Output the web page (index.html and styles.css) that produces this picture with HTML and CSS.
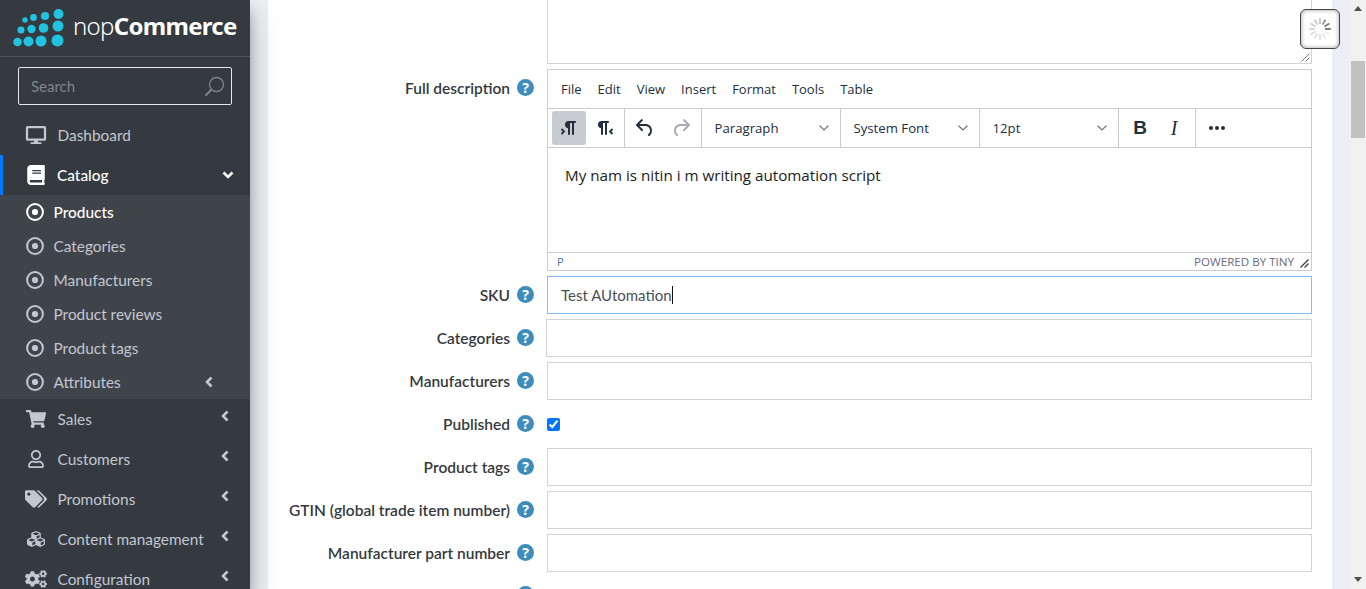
FILE: index.html
```html
<!DOCTYPE html>
<html lang="en">
<head>
<meta charset="utf-8">
<title>Edit product - nopCommerce</title>
<link rel="stylesheet" href="styles.css">
</head>
<body>
<svg class="defs" aria-hidden="true">
  <symbol id="chev-left" viewBox="0 0 10 12"><path d="M7.5 1.5 3 6l4.5 4.5" fill="none" stroke="currentColor" stroke-width="2.6"/></symbol>
  <symbol id="circle-dot" viewBox="0 0 18 18"><circle cx="9" cy="9" r="7.9" fill="none" stroke="currentColor" stroke-width="2"/><circle cx="9" cy="9" r="3.1" fill="currentColor"/></symbol>
  <symbol id="select-chev" viewBox="0 0 10 6"><path d="M.6.8 5 5 9.4.8" fill="none" stroke="currentColor" stroke-width="1.2"/></symbol>
</svg>
<div class="app">
  <aside class="sidebar">
    <div class="brand">
      <svg class="brand-mark" viewBox="0 0 70 50" aria-hidden="true">
        <g fill="#22c3e0">
          <circle cx="25" cy="20" r="2.700"/><circle cx="33.500" cy="17.500" r="3.400"/><circle cx="45" cy="16" r="4.100"/><circle cx="58.500" cy="14" r="5"/>
          <circle cx="21" cy="30" r="3.500"/><circle cx="31.500" cy="29" r="4.200"/><circle cx="43.500" cy="28" r="4.800"/><circle cx="58" cy="26" r="5.500"/>
          <circle cx="17.500" cy="42" r="4.300"/><circle cx="28.500" cy="41.500" r="5"/><circle cx="41" cy="41" r="5.500"/><circle cx="57.500" cy="40.500" r="6"/>
        </g>
      </svg>
      <span class="brand-name">nop<b>Commerce</b></span>
    </div>
    <div class="search">
      <span class="search-text">Search</span>
      <svg class="search-icon" viewBox="0 0 21 21" aria-hidden="true"><circle cx="12.500" cy="8.500" r="7" fill="none" stroke="currentColor" stroke-width="1.300"/><path d="M7.500 13.500 1.500 19.500" fill="none" stroke="currentColor" stroke-width="2"/></svg>
    </div>
    <nav class="nav">
      <a class="nav-item">
        <svg class="nav-icon" viewBox="0 0 576 512" aria-hidden="true"><path fill="currentColor" d="M528 0H48C21.500 0 0 21.500 0 48v320c0 26.500 21.500 48 48 48h192l-16 48h-72c-13.300 0-24 10.700-24 24s10.700 24 24 24h272c13.300 0 24-10.700 24-24s-10.700-24-24-24h-72l-16-48h192c26.500 0 48-21.500 48-48V48c0-26.500-21.500-48-48-48zm-16 352H64V64h448v288z"/></svg>
        <span>Dashboard</span>
      </a>
      <a class="nav-item is-open">
        <svg class="nav-icon nav-icon-book" viewBox="0 0 448 512" aria-hidden="true"><path fill="currentColor" d="M448 360V24c0-13.300-10.700-24-24-24H96C43 0 0 43 0 96v320c0 53 43 96 96 96h328c13.300 0 24-10.700 24-24v-16c0-7.500-3.500-14.300-8.900-18.700-4.200-15.400-4.200-59.300 0-74.700 5.400-4.300 8.900-11.100 8.900-18.600zM128 134c0-3.300 2.700-6 6-6h212c3.300 0 6 2.700 6 6v20c0 3.300-2.700 6-6 6H134c-3.300 0-6-2.700-6-6v-20zm0 64c0-3.300 2.700-6 6-6h212c3.300 0 6 2.700 6 6v20c0 3.300-2.700 6-6 6H134c-3.300 0-6-2.700-6-6v-20zm253.400 250H96c-17.700 0-32-14.300-32-32 0-17.600 14.400-32 32-32h285.400c-1.900 17.100-1.900 46.900 0 64z"/></svg>
        <span>Catalog</span>
        <svg class="chev chev-down" viewBox="0 0 12 10" aria-hidden="true"><path d="M1.500 2.500 6 7l4.500-4.500" fill="none" stroke="currentColor" stroke-width="2.600"/></svg>
      </a>
      <div class="subnav">
        <a class="sub-item is-active"><svg class="sub-icon"><use href="#circle-dot"/></svg><span>Products</span></a>
        <a class="sub-item"><svg class="sub-icon"><use href="#circle-dot"/></svg><span>Categories</span></a>
        <a class="sub-item"><svg class="sub-icon"><use href="#circle-dot"/></svg><span>Manufacturers</span></a>
        <a class="sub-item"><svg class="sub-icon"><use href="#circle-dot"/></svg><span>Product reviews</span></a>
        <a class="sub-item"><svg class="sub-icon"><use href="#circle-dot"/></svg><span>Product tags</span></a>
        <a class="sub-item"><svg class="sub-icon"><use href="#circle-dot"/></svg><span>Attributes</span><svg class="chev chev-sub"><use href="#chev-left"/></svg></a>
      </div>
      <a class="nav-item">
        <svg class="nav-icon" viewBox="0 0 576 512" aria-hidden="true"><path fill="currentColor" d="M528.120 301.319l47.273-208C578.806 78.301 567.391 64 551.990 64H159.208l-9.166-44.810C147.758 8.021 137.930 0 126.529 0H24C10.745 0 0 10.745 0 24v16c0 13.255 10.745 24 24 24h69.883l70.248 343.435C147.325 417.100 136 435.222 136 456c0 30.928 25.072 56 56 56s56-25.072 56-56c0-15.674-6.447-29.835-16.824-40h209.647C430.447 426.165 424 440.326 424 456c0 30.928 25.072 56 56 56s56-25.072 56-56c0-22.172-12.888-41.332-31.579-50.405l5.517-24.276c3.413-15.018-8.002-29.319-23.403-29.319H218.117l-6.545-32h293.145c11.206 0 20.920-7.754 23.403-18.681z"/></svg>
        <span>Sales</span>
        <svg class="chev"><use href="#chev-left"/></svg>
      </a>
      <a class="nav-item">
        <svg class="nav-icon" viewBox="0 0 448 512" aria-hidden="true"><path fill="currentColor" d="M313.600 304c-28.700 0-42.500 16-89.600 16-47.100 0-60.800-16-89.600-16C60.200 304 0 364.200 0 438.400V464c0 26.500 21.500 48 48 48h352c26.500 0 48-21.500 48-48v-25.600c0-74.200-60.200-134.400-134.400-134.400zM400 464H48v-25.600c0-47.600 38.800-86.400 86.400-86.400 14.600 0 38.300 16 89.600 16 51.700 0 74.900-16 89.600-16 47.600 0 86.400 38.800 86.400 86.400V464zM224 288c79.500 0 144-64.500 144-144S303.500 0 224 0 80 64.500 80 144s64.500 144 144 144zm0-240c52.900 0 96 43.100 96 96s-43.100 96-96 96-96-43.100-96-96 43.100-96 96-96z"/></svg>
        <span>Customers</span>
        <svg class="chev"><use href="#chev-left"/></svg>
      </a>
      <a class="nav-item">
        <svg class="nav-icon" viewBox="0 0 640 512" aria-hidden="true"><path fill="currentColor" d="M497.941 225.941L286.059 14.059A48 48 0 0 0 252.118 0H48C21.490 0 0 21.490 0 48v204.118a48 48 0 0 0 14.059 33.941l211.882 211.882c18.744 18.745 49.136 18.746 67.882 0l204.118-204.118c18.745-18.745 18.745-49.137 0-67.882zM112 160c-26.510 0-48-21.490-48-48s21.490-48 48-48 48 21.490 48 48-21.490 48-48 48zm513.941 133.823L421.823 497.941c-18.745 18.745-49.137 18.745-67.882 0l-.36-.36L527.640 323.522c16.999-16.999 26.360-39.600 26.360-63.640s-9.362-46.641-26.360-63.640L331.397 0h48.721a48 48 0 0 1 33.941 14.059l211.882 211.882c18.745 18.745 18.745 49.137 0 67.882z"/></svg>
        <span>Promotions</span>
        <svg class="chev"><use href="#chev-left"/></svg>
      </a>
      <a class="nav-item">
        <svg class="nav-icon" viewBox="0 0 512 512" aria-hidden="true"><path fill="currentColor" d="M488.600 250.200L392 214V105.500c0-15-9.300-28.400-23.400-33.700l-100-37.500c-8.100-3.100-17.100-3.100-25.300 0l-100 37.500c-14.100 5.300-23.400 18.700-23.400 33.700V214l-96.600 36.200C9.300 255.500 0 268.900 0 283.900V394c0 13.600 7.700 26.100 19.900 32.200l100 50c10.100 5.100 22.100 5.100 32.200 0l103.900-52 103.900 52c10.100 5.100 22.100 5.100 32.200 0l100-50c12.200-6.100 19.900-18.600 19.900-32.200V283.900c0-15-9.300-28.400-23.400-33.700zM358 214.800l-85 31.900v-68.200l85-37v73.300zM154 104.100l102-38.200 102 38.200v.6l-102 41.400-102-41.400v-.6zm84 291.100l-85 42.500v-79.100l85-38.800v75.400zm0-112l-102 41.400-102-41.400v-.6l102-38.200 102 38.200v.6zm240 112l-85 42.500v-79.100l85-38.800v75.400zm0-112l-102 41.400-102-41.400v-.6l102-38.200 102 38.200v.6z"/></svg>
        <span>Content management</span>
        <svg class="chev"><use href="#chev-left"/></svg>
      </a>
      <a class="nav-item">
        <svg class="nav-icon" viewBox="0 0 640 512" aria-hidden="true"><path fill="currentColor" d="M512.100 191l-8.200 14.300c-3 5.300-9.400 7.500-15.100 5.400-11.800-4.400-22.600-10.700-32.100-18.600-4.600-3.800-5.800-10.500-2.800-15.700l8.200-14.300c-6.900-8-12.300-17.300-15.900-27.400h-16.500c-6 0-11.200-4.300-12.200-10.300-2-12-2.100-24.600 0-37.100 1-6 6.200-10.400 12.200-10.400h16.500c3.600-10.100 9-19.400 15.900-27.400l-8.200-14.300c-3-5.200-1.900-11.900 2.800-15.700 9.500-7.900 20.400-14.200 32.100-18.600 5.700-2.100 12.100.1 15.100 5.400l8.200 14.300c10.500-1.900 21.200-1.900 31.700 0L552 6.300c3-5.300 9.400-7.500 15.100-5.400 11.800 4.400 22.600 10.700 32.100 18.600 4.600 3.800 5.800 10.500 2.800 15.700l-8.200 14.300c6.900 8 12.300 17.300 15.900 27.400h16.500c6 0 11.200 4.300 12.200 10.300 2 12 2.100 24.600 0 37.100-1 6-6.200 10.400-12.200 10.400h-16.500c-3.600 10.100-9 19.400-15.900 27.400l8.200 14.300c3 5.200 1.900 11.900-2.800 15.700-9.500 7.900-20.400 14.200-32.100 18.600-5.700 2.100-12.100-.1-15.100-5.400l-8.200-14.300c-10.400 1.900-21.200 1.900-31.700 0zm-10.500-58.800c38.500 29.600 82.400-14.300 52.800-52.800-38.500-29.700-82.400 14.300-52.800 52.800zM386.300 286.100l33.700 16.800c10.100 5.800 14.500 18.100 10.500 29.100-8.900 24.200-26.400 46.400-42.600 65.800-7.400 8.900-20.200 11.100-30.300 5.300l-29.100-16.800c-16 13.700-34.600 24.600-54.900 31.700v33.600c0 11.600-8.300 21.600-19.700 23.600-24.600 4.200-50.400 4.400-75.900 0-11.500-2-20-11.900-20-23.600V418c-20.300-7.200-38.900-18-54.900-31.700L74 403c-10 5.800-22.900 3.600-30.300-5.300-16.200-19.400-33.300-41.600-42.200-65.700-4-10.900.4-23.200 10.500-29.100l33.300-16.800c-3.900-20.900-3.900-42.400 0-63.400L12 205.800c-10.100-5.800-14.600-18.100-10.500-29 8.900-24.200 26-46.400 42.200-65.800 7.400-8.900 20.200-11.100 30.300-5.300l29.100 16.800c16-13.700 34.600-24.600 54.900-31.700V57.100c0-11.500 8.200-21.500 19.600-23.500 24.600-4.200 50.500-4.400 76-.1 11.500 2 20 11.900 20 23.600v33.600c20.300 7.200 38.900 18 54.900 31.700l29.100-16.800c10-5.800 22.900-3.600 30.300 5.300 16.200 19.400 33.200 41.600 42.100 65.800 4 10.900.1 23.200-10 29.100l-33.700 16.800c3.900 21 3.900 42.500 0 63.500zm-117.600 21.100c59.200-77-28.700-164.900-105.700-105.700-59.200 77 28.700 164.900 105.700 105.700zm243.400 182.700l-8.200 14.300c-3 5.300-9.400 7.500-15.100 5.400-11.800-4.400-22.600-10.700-32.100-18.600-4.600-3.800-5.800-10.500-2.800-15.700l8.200-14.300c-6.900-8-12.300-17.300-15.900-27.400h-16.500c-6 0-11.200-4.300-12.200-10.300-2-12-2.100-24.600 0-37.100 1-6 6.200-10.400 12.200-10.400h16.500c3.600-10.100 9-19.400 15.900-27.400l-8.200-14.300c-3-5.200-1.900-11.900 2.800-15.700 9.500-7.900 20.400-14.200 32.100-18.600 5.700-2.100 12.100.1 15.100 5.400l8.200 14.300c10.500-1.900 21.200-1.900 31.700 0l8.200-14.300c3-5.300 9.400-7.500 15.100-5.400 11.800 4.400 22.600 10.700 32.100 18.600 4.600 3.800 5.800 10.500 2.800 15.700l-8.200 14.300c6.900 8 12.300 17.300 15.900 27.400h16.500c6 0 11.200 4.300 12.200 10.300 2 12 2.100 24.600 0 37.100-1 6-6.200 10.400-12.200 10.400h-16.500c-3.600 10.100-9 19.400-15.900 27.400l8.200 14.300c3 5.200 1.900 11.900-2.800 15.700-9.500 7.900-20.400 14.200-32.100 18.600-5.700 2.100-12.100-.1-15.100-5.400l-8.200-14.300c-10.400 1.900-21.200 1.900-31.700 0zM501.600 431c38.500 29.600 82.400-14.300 52.800-52.800-38.500-29.600-82.400 14.300-52.800 52.800z"/></svg>
        <span>Configuration</span>
        <svg class="chev"><use href="#chev-left"/></svg>
      </a>
    </nav>
  </aside>

  <main class="main">
    <form class="panel">
      <div class="row row-top">
        <div class="label-col"></div>
        <div class="textarea-stub">
          <svg class="grip" viewBox="0 0 10 10" aria-hidden="true"><path d="M9.500 1.500 1.500 9.500M9.500 5.500 5.500 9.500" stroke="#777" fill="none"/></svg>
        </div>
      </div>

      <div class="row row-editor">
        <div class="label-col"><label class="label">Full description</label><span class="help">?</span></div>
        <div class="editor">
          <div class="menubar">
            <span>File</span><span>Edit</span><span>View</span><span>Insert</span><span>Format</span><span>Tools</span><span>Table</span>
          </div>
          <div class="toolbar">
            <div class="group group-dir">
              <span class="tool is-on"><svg viewBox="0 0 24 24" class="tool-svg"><path fill="#222f3e" d="M11 5h7a1 1 0 0 1 0 2h-1v11a1 1 0 0 1-2 0V7h-2v11a1 1 0 0 1-2 0v-6c-.5 0-1 0-1.400-.3A3.400 3.400 0 0 1 8.200 10a3.300 3.300 0 0 1 0-2.800 3.400 3.400 0 0 1 1.300-1.700c.5-.3 .9-.5 1.500-.5z"/><path fill="none" stroke="#222f3e" stroke-width="1.800" d="M4.500 13 7 15.500 4.500 18"/></svg></span>
              <span class="tool"><svg viewBox="0 0 24 24" class="tool-svg"><path fill="#222f3e" d="M8 5h7a1 1 0 0 1 0 2h-1v11a1 1 0 0 1-2 0V7h-2v11a1 1 0 0 1-2 0v-6c-.5 0-1 0-1.400-.3A3.400 3.400 0 0 1 5.200 10a3.300 3.300 0 0 1 0-2.800 3.400 3.400 0 0 1 1.300-1.700c.5-.3 .9-.5 1.500-.5z"/><path fill="none" stroke="#222f3e" stroke-width="1.800" d="M19.500 13 17 15.500l2.500 2.500"/></svg></span>
            </div>
            <div class="group group-undo">
              <span class="tool"><svg viewBox="0 0 24 24" class="tool-svg"><path fill="#222f3e" d="M6.400 8H12c3.700 0 6.200 2 6.800 5.100.6 2.700-.4 5.600-2.300 6.800a1 1 0 0 1-1-1.800c1.100-.7 1.800-2.700 1.400-4.600-.5-2.100-2.100-3.500-4.900-3.500H6.400l3.300 3.300a1 1 0 1 1-1.400 1.400l-5-5a1 1 0 0 1 0-1.400l5-5a1 1 0 0 1 1.400 1.400L6.400 8z"/></svg></span>
              <span class="tool"><svg viewBox="0 0 24 24" class="tool-svg"><path fill="#a7abb2" d="M17.600 8H12c-3.700 0-6.200 2-6.800 5.100-.6 2.700.4 5.600 2.300 6.800a1 1 0 0 0 1-1.800c-1.100-.7-1.800-2.700-1.400-4.600.5-2.100 2.100-3.500 4.900-3.500h5.600l-3.300 3.300a1 1 0 1 0 1.400 1.400l5-5a1 1 0 0 0 0-1.400l-5-5a1 1 0 0 0-1.400 1.400L17.600 8z"/></svg></span>
            </div>
            <div class="group select"><span>Paragraph</span><svg class="select-chev"><use href="#select-chev"/></svg></div>
            <div class="group select"><span>System Font</span><svg class="select-chev"><use href="#select-chev"/></svg></div>
            <div class="group select"><span>12pt</span><svg class="select-chev"><use href="#select-chev"/></svg></div>
            <div class="group group-format">
              <span class="tool tool-b">B</span>
              <span class="tool tool-i">I</span>
            </div>
            <div class="group group-more">
              <span class="tool"><svg viewBox="0 0 24 24" class="tool-svg"><circle cx="6" cy="12" r="2" fill="#222f3e"/><circle cx="12" cy="12" r="2" fill="#222f3e"/><circle cx="18" cy="12" r="2" fill="#222f3e"/></svg></span>
            </div>
          </div>
          <div class="editor-body">My nam is nitin i m writing automation script</div>
          <div class="statusbar">
            <span class="path">P</span>
            <span class="powered">POWERED BY TINY</span>
            <svg class="grip-status" viewBox="0 0 10 10" aria-hidden="true"><path d="M9.500 1.500 1.500 9.500M9.500 5.500 5.500 9.500" stroke="#444" stroke-width="1.400" fill="none"/></svg>
          </div>
        </div>
      </div>

      <div class="row">
        <div class="label-col"><label class="label">SKU</label><span class="help">?</span></div>
        <div class="field field-focus"><span>Test AUtomation</span><i class="caret"></i></div>
      </div>
      <div class="row">
        <div class="label-col"><label class="label">Categories</label><span class="help">?</span></div>
        <div class="field field-wide"></div>
      </div>
      <div class="row">
        <div class="label-col"><label class="label">Manufacturers</label><span class="help">?</span></div>
        <div class="field"></div>
      </div>
      <div class="row">
        <div class="label-col"><label class="label">Published</label><span class="help">?</span></div>
        <div class="check-cell"><input class="check" type="checkbox" checked></div>
      </div>
      <div class="row">
        <div class="label-col"><label class="label">Product tags</label><span class="help">?</span></div>
        <div class="field"></div>
      </div>
      <div class="row">
        <div class="label-col"><label class="label">GTIN (global trade item number)</label><span class="help">?</span></div>
        <div class="field"></div>
      </div>
      <div class="row">
        <div class="label-col"><label class="label">Manufacturer part number</label><span class="help">?</span></div>
        <div class="field"></div>
      </div>
      <div class="row">
        <div class="label-col label-col-peek"><span class="help"></span></div>
        <div></div>
      </div>
    </form>
    <div class="spinner-box" aria-hidden="true">
      <svg viewBox="0 0 36 36" class="spinner">
        <g stroke-width="2" stroke-linecap="butt" fill="none">
          <path d="M18 5v7" stroke="#bbb"/>
          <path d="M24.500 6.700l-3.500 6" stroke="#888"/>
          <path d="M29.300 11.500l-6 3.500" stroke="#777"/>
          <path d="M31 18h-7" stroke="#666"/>
          <path d="M29.300 24.500l-6-3.500" stroke="#eee"/>
          <path d="M24.500 29.300l-3.500-6" stroke="#e6e6e6"/>
          <path d="M18 31v-7" stroke="#ddd"/>
          <path d="M11.500 29.300l3.500-6" stroke="#ddd"/>
          <path d="M6.700 24.500l6-3.500" stroke="#d8d8d8"/>
          <path d="M5 18h7" stroke="#d0d0d0"/>
          <path d="M6.700 11.500l6 3.500" stroke="#ccc"/>
          <path d="M11.500 6.700l3.500 6" stroke="#c4c4c4"/>
        </g>
      </svg>
    </div>
  </main>

  <div class="scrollbar" aria-hidden="true">
    <span class="arrow arrow-up"></span>
    <span class="thumb"></span>
    <span class="arrow arrow-down"></span>
  </div>
</div>
</body>
</html>
```
FILE: styles.css
```css
* { box-sizing: border-box; }
html, body { margin: 0; height: 589px; overflow: hidden; }
body { font-family: "Lato", "Noto Sans", sans-serif; background: #ecf0f5; color: #212529; }
.defs { display: none; }

.app { display: flex; height: 589px; overflow: hidden; }

/* Sidebar */
.sidebar {
  flex: 0 0 250px; width: 250px; height: 589px; overflow: hidden;
  background: #343a40; color: #c2c7d0; position: relative; z-index: 2;
  box-shadow: 0 14px 28px rgba(0,0,0,.25), 0 10px 10px rgba(0,0,0,.22);
}
.brand {
  height: 57px; border-bottom: 1px solid #4b545c;
  display: flex; align-items: flex-start; gap: 3px;
}
.brand-mark { width: 70px; height: 50px; flex: none; }
.brand-name { font-size: 24px; line-height: 32px; color: #fff; font-family: "Noto Sans", sans-serif; font-weight: 300; letter-spacing: -.7px; margin-top: 10px; }
.brand-name b { font-weight: 700; }
.search {
  margin: 10px 18px 10px; height: 38px; border: 1px solid #e8e8e8; border-radius: 2px;
  display: flex; align-items: center; justify-content: space-between; padding: 0 6px 0 12px;
}
.search-text { font-size: 15px; color: #7f858b; }
.search-icon { width: 21px; height: 21px; color: #808589; }

.nav { display: flex; flex-direction: column; }
.nav-item {
  height: 40px; display: flex; align-items: center; padding-left: 25px;
  font-size: 15.400px; color: #c2c7d0; position: relative;
}
.nav-item > span { margin-left: 10.500px; flex: 1; }
.nav-item.is-open { color: #fff; box-shadow: inset 3px 0 0 #007bff; font-weight: 500; }
.nav-item.is-open > span { margin-left: 10px; }
.nav-icon { width: 22px; height: 18px; flex: none; }
.nav-icon-book { height: 20px; width: 22px; }
.chev { width: 10px; height: 12px; color: #c2c7d0; flex: none; margin: -6px 20px 0 0; }
.chev-down { color: #fff; width: 12px; height: 10px; margin: 0 16px 0 0; }

.subnav { background: #3f444b; display: flex; flex-direction: column; }
.sub-item { height: 34px; display: flex; align-items: center; padding-left: 26px; font-size: 15.400px; color: #c2c7d0; }
.sub-item > span { margin-left: 9.500px; flex: 1; }
.sub-item.is-active { color: #fff; font-weight: 500; }
.sub-icon { width: 18px; height: 18px; flex: none; }
.chev-sub { margin: 0 36px 0 0; }

/* Main */
.main { flex: 1; min-width: 0; padding-left: 18px; position: relative; z-index: 1; display: flex; }
.panel {
  flex: 1; background: #fff; padding-right: 20px;
  display: flex; flex-direction: column; gap: 5px; overflow: hidden;
}
.row { display: grid; grid-template-columns: 279px 1fr; height: 38px; flex: none; }
.row-top { height: 64px; }
.row-editor { height: 202px; }
.label-col { display: flex; justify-content: flex-end; align-items: center; padding-right: 13px; gap: 7px; height: 38px; }
.label { font-size: 15.500px; font-weight: 600; color: #343a40; white-space: nowrap; }
.help {
  width: 17px; height: 17px; border-radius: 50%; background: #3c8dbc; color: #fff; flex: none;
  font: 700 14px/17px "Noto Sans", sans-serif; text-align: center; margin-top: -1px;
}
.label-col-peek { align-items: flex-start; padding-top: 10px; }

.textarea-stub { border: 1px solid #ced4da; border-top: 0; background: #fff; position: relative; display: flex; justify-content: flex-end; align-items: flex-end; padding: 0 1px 1px 0; }
.grip { width: 10px; height: 10px; }

.field { border: 1px solid #ced4da; background: #fff; height: 38px; display: flex; align-items: center; }
.field-wide { margin-left: -1px; }
.field-focus { border-color: #80bdff; padding-left: 13px; font-size: 15px; color: #495057; }
.caret { width: 1px; height: 18px; background: #111; display: block; }
.check-cell { display: flex; align-items: center; }
.check { margin: 0; width: 13px; height: 13px; }

/* Editor */
.editor { border: 1px solid #ccc; height: 202px; display: flex; flex-direction: column; background: #fff; font-family: "Open Sans", "Noto Sans", sans-serif; color: #222f3e; }
.menubar { height: 39px; flex: none; display: flex; align-items: center; gap: 16px; padding-left: 13px; font-size: 13px; border-bottom: 1px solid #ccc; }
.toolbar { height: 39px; flex: none; display: flex; border-bottom: 1px solid #ccc; }
.group { display: flex; align-items: center; border-right: 1px solid #ccc; height: 38px; flex: none; }
.group-dir { width: 77px; padding-left: 4px; gap: 2px; }
.group-undo { width: 77px; padding-left: 3px; gap: 2px; }
.tool { width: 34px; height: 34px; display: flex; align-items: center; justify-content: center; border-radius: 3px; }
.tool.is-on { background: #c8cbcf; }
.tool-svg { width: 24px; height: 24px; }
.tool-b { font: 700 19px "Liberation Sans", sans-serif; }
.tool-i { font: italic 400 20px "Liberation Serif", serif; margin-left: -1px; }
.select { width: 139px; justify-content: space-between; padding: 0 11px 0 12.500px; font-size: 13.200px; }
.select-chev { width: 10px; height: 6px; color: #6a7480; }
.group-format { width: 77px; padding-left: 4px; gap: 1px; }
.group-more { border-right: 0; padding-left: 4px; }
.editor-body { flex: 1; padding: 17px 17px; font-size: 15.200px; line-height: 20px; color: #1c1c1c; border-bottom: 1px solid #ccc; }
.statusbar { height: 17px; flex: none; display: flex; align-items: center; padding: 0 2px 0 9px; font-size: 11px; }
.path { color: #4a7ba8; flex: 1; }
.powered { color: #6c6a80; margin-right: 5px; font-size: 11.600px; }
.grip-status { width: 10px; height: 10px; margin-top: 3px; }

/* Spinner */
.spinner-box {
  position: absolute; left: 1050px; top: 9px; width: 40px; height: 40px;
  border: 1px solid #444; border-radius: 6px; background: #fff;
  box-shadow: inset 0 0 4px #999; display: flex; align-items: center; justify-content: center;
}
.spinner { width: 30px; height: 30px; }

/* Scrollbar */
.scrollbar { flex: 0 0 34px; padding-left: 17px; display: flex; flex-direction: column; align-items: center; background: linear-gradient(90deg, #ebeef4 17px, #f1f1f1 17px); }
.arrow { width: 0; height: 0; border-left: 4px solid transparent; border-right: 4px solid transparent; flex: none; }
.arrow-up { border-bottom: 5px solid #505050; margin-top: 6px; }
.arrow-down { border-top: 5px solid #505050; margin-top: 439px; }
.thumb { width: 14px; height: 77px; background: #c1c1c1; margin-top: 50px; flex: none; }
```
